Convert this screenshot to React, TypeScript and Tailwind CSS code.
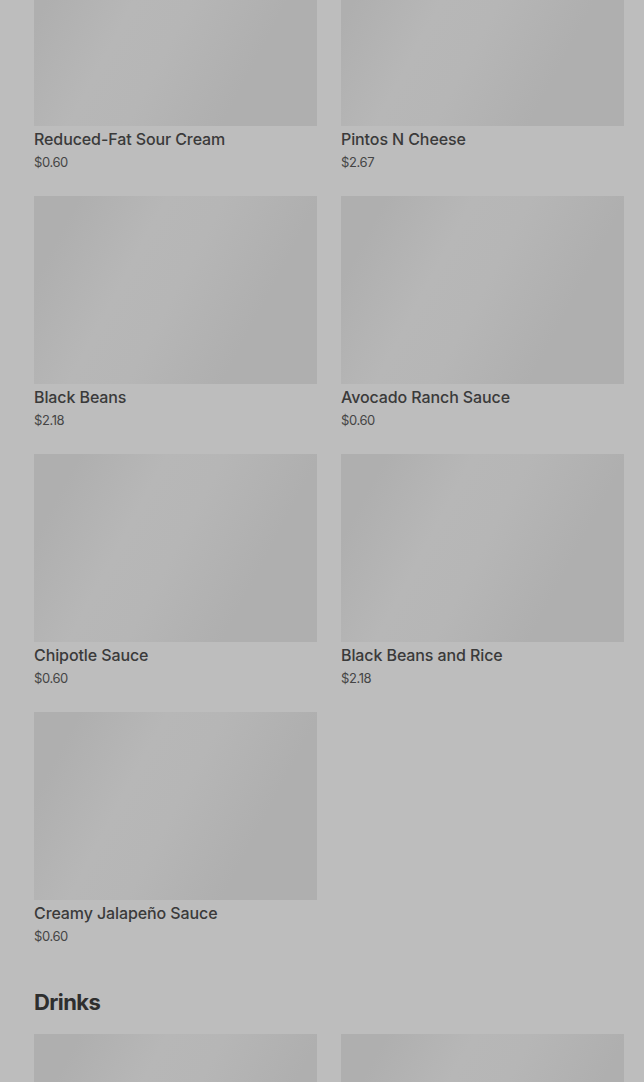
import React from "react";

type Item = { name: string; price: string };

const rows: Item[] = [
  { name: "Reduced-Fat Sour Cream", price: "$0.60" },
  { name: "Pintos N Cheese", price: "$2.67" },
  { name: "Black Beans", price: "$2.18" },
  { name: "Avocado Ranch Sauce", price: "$0.60" },
  { name: "Chipotle Sauce", price: "$0.60" },
  { name: "Black Beans and Rice", price: "$2.18" },
  { name: "Creamy Jalapeño Sauce", price: "$0.60" },
];

function Tile() {
  return (
    <div className="h-[188px] w-full bg-[linear-gradient(118deg,#afafaf_12%,#b7b7b7_35%,#b6b6b6_50%,#afafaf_75%)]" />
  );
}

function Card({ item }: { item: Item }) {
  return (
    <div className="flex flex-col h-[258px]">
      <Tile />
      <div className="pt-[3px] text-[16px] leading-[20px] font-medium text-[#3a3a3a] tracking-[-0.1px]">
        {item.name}
      </div>
      <div className="mt-[4px] text-[13px] leading-[18px] text-[#454545] tracking-[-0.4px]">
        {item.price}
      </div>
    </div>
  );
}

export default function App() {
  return (
    <div
      className="min-h-[1082px] h-[1082px] overflow-hidden bg-[#bdbdbd] pl-[34px] pr-[20px]"
      style={{ fontFamily: "Inter, 'Noto Sans', sans-serif" }}
    >
      <div className="mt-[-62px] grid grid-cols-2 gap-x-[24px]">
        {rows.map((it, i) => (
          <Card key={i} item={it} />
        ))}
      </div>
      <h2 className="mt-[18px] text-[22px] leading-[28px] font-bold text-[#2e2e2e] tracking-[-0.6px]">
        Drinks
      </h2>
      <div className="mt-[18px] grid grid-cols-2 gap-x-[24px]">
        <Tile />
        <Tile />
      </div>
    </div>
  );
}
